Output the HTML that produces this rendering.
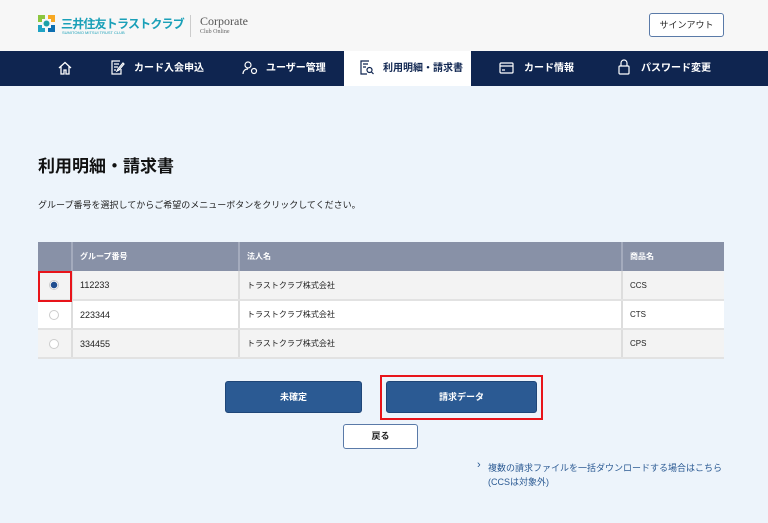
<!DOCTYPE html>
<html><head><meta charset="utf-8"><style>
*{margin:0;padding:0;box-sizing:border-box}
body{width:768px;height:523px;overflow:hidden;background:#edf4fb;font-family:"Liberation Sans","Noto Sans CJK JP",sans-serif;color:#222;position:relative}
.hdr{position:absolute;left:0;top:0;width:768px;height:51px;background:#f7f7f7}
.nav{position:absolute;left:0;top:51px;width:768px;height:35px;background:#0f2550}
.it{position:absolute;top:51px;height:35px;line-height:35px;color:#fff;font-size:10px;font-weight:bold;white-space:nowrap}
.act{position:absolute;left:344px;top:51px;width:127px;height:35px;background:#fff}
.abs{position:absolute}
table{position:absolute;left:38px;top:242px;width:686px;border-collapse:collapse;font-size:8px}
td{border-right:2px solid #ddd;border-bottom:2px solid #e2e2e2;padding-left:7px;height:29px}
tr.h td{background:#8891a7;color:#fff;font-weight:bold;height:29px;border-right:2px solid #a4abbd;border-bottom:none}
tr.g td{background:#f3f3f3}
tr.w td{background:#fff}
tr td:last-child{border-right:none}
.rad{width:10px;height:10px;border:1px solid #ccc;border-radius:50%;background:#fff;margin-left:4px}
.btn{position:absolute;background:#2b5a93;border:1px solid #1f4678;border-radius:3px;color:#fff;font-size:9px;font-weight:bold;text-align:center}
</style></head><body>
<div class="hdr"></div>
<svg class="abs" style="left:38px;top:15px" width="17" height="17" viewBox="0 0 17 17"><path d="M0 0h7v4H4v3H0z" fill="#8cc63f"/><path d="M10 0h7v7h-4V4h-3z" fill="#f7a823"/><path d="M0 10h4v3h3v4H0z" fill="#1fa3c4"/><path d="M13 10h4v7h-7v-4h3z" fill="#0e6fb1"/><circle cx="8.5" cy="8.5" r="3" fill="#1aa0a8"/></svg>
<div class="abs" style="left:61px;top:15px;font-size:12px;color:#1aa0b8;font-weight:bold;letter-spacing:-0.8px;white-space:nowrap">三井住友トラストクラブ</div>
<div class="abs" style="left:62px;top:30px;font-size:4px;color:#1aa0b8;white-space:nowrap">SUMITOMO MITSUI TRUST CLUB</div>
<div class="abs" style="left:190px;top:15px;width:1px;height:22px;background:#ccc"></div>
<div class="abs" style="left:200px;top:14px;font-family:'Liberation Serif',serif;font-size:12px;color:#555">Corporate</div>
<div class="abs" style="left:200px;top:29px;font-family:'Liberation Serif',serif;font-size:6px;color:#666">Club Online</div>
<div class="abs" style="left:649px;top:13px;width:75px;height:24px;border:1px solid #5a7aa8;border-radius:3px;background:#fff;font-size:9px;text-align:center;line-height:22px;color:#222">サインアウト</div>
<div class="nav"></div><div class="act"></div>
<svg class="abs" style="left:58px;top:61px" width="14" height="14" viewBox="0 0 14 14" fill="none" stroke="#fff" stroke-width="1.3"><path d="M1 7L7 1.5 13 7M3 5.5V13h3V9h2v4h3V5.5"/></svg>
<svg class="abs" style="left:111px;top:60px" width="14" height="15" viewBox="0 0 14 15" fill="none" stroke="#fff" stroke-width="1.2"><path d="M9 1H1v13h9V9M3 4h5M3 7h4M3 10h2M12 3l-5 6-1 2 2-1 5-6z"/></svg>
<div class="it" style="left:134px">カード入会申込</div>
<svg class="abs" style="left:242px;top:61px" width="16" height="14" viewBox="0 0 16 14" fill="none" stroke="#fff" stroke-width="1.2"><circle cx="6" cy="4" r="3"/><path d="M1 13c0-3 2-5 5-5"/><circle cx="12" cy="10" r="2.5"/></svg>
<div class="it" style="left:266px">ユーザー管理</div>
<svg class="abs" style="left:360px;top:60px" width="14" height="15" viewBox="0 0 14 15" fill="none" stroke="#0f2550" stroke-width="1.2"><path d="M9 1H1v13h6M3 4h5M3 7h3"/><circle cx="9.5" cy="10" r="2.5"/><path d="M11.5 12l2 2"/></svg>
<div class="it" style="left:383px;color:#0f2550">利用明細・請求書</div>
<svg class="abs" style="left:499px;top:62px" width="15" height="12" viewBox="0 0 15 12" fill="none" stroke="#fff" stroke-width="1.2"><rect x="1" y="1" width="13" height="10" rx="1"/><path d="M1 4h13M3 8h3"/></svg>
<div class="it" style="left:524px">カード情報</div>
<svg class="abs" style="left:618px;top:59px" width="12" height="16" viewBox="0 0 12 16" fill="none" stroke="#fff" stroke-width="1.2"><rect x="1" y="7" width="10" height="8" rx="1"/><path d="M3 7V4a3 3 0 016 0v3"/></svg>
<div class="it" style="left:641px">パスワード変更</div>
<div class="abs" style="left:38px;top:152px;font-size:17px;font-weight:bold;color:#111">利用明細・請求書</div>
<div class="abs" style="left:38px;top:198px;font-size:9px;color:#222">グループ番号を選択してからご希望のメニューボタンをクリックしてください。</div>
<table>
<tr class="h"><td style="width:34px"></td><td style="width:167px">グループ番号</td><td style="width:383px">法人名</td><td>商品名</td></tr>
<tr class="g"><td><div class="rad" style="background:radial-gradient(circle,#1f4d8f 0 3px,#fff 3.5px)"></div></td><td style="font-size:9px">112233</td><td>トラストクラブ株式会社</td><td>CCS</td></tr>
<tr class="w"><td><div class="rad"></div></td><td style="font-size:9px">223344</td><td>トラストクラブ株式会社</td><td>CTS</td></tr>
<tr class="g"><td><div class="rad"></div></td><td style="font-size:9px">334455</td><td>トラストクラブ株式会社</td><td>CPS</td></tr>
</table>
<div class="abs" style="left:38px;top:271px;width:34px;height:31px;border:2px solid #e8141a"></div>
<div class="btn" style="left:225px;top:381px;width:137px;height:32px;line-height:30px">未確定</div>
<div class="btn" style="left:386px;top:381px;width:151px;height:32px;line-height:30px">請求データ</div>
<div class="abs" style="left:380px;top:375px;width:163px;height:45px;border:2px solid #e8141a"></div>
<div class="abs" style="left:343px;top:424px;width:75px;height:25px;border:1px solid #5a7aa8;border-radius:3px;background:#fff;font-size:9px;font-weight:bold;text-align:center;line-height:23px">戻る</div>
<div class="abs" style="left:477px;top:459px;font-size:11px;color:#2b5a93">›</div>
<div class="abs" style="left:488px;top:461px;font-size:9px;color:#2b5a93;line-height:14px">複数の請求ファイルを一括ダウンロードする場合はこちら<br>(CCSは対象外)</div>
</body></html>
